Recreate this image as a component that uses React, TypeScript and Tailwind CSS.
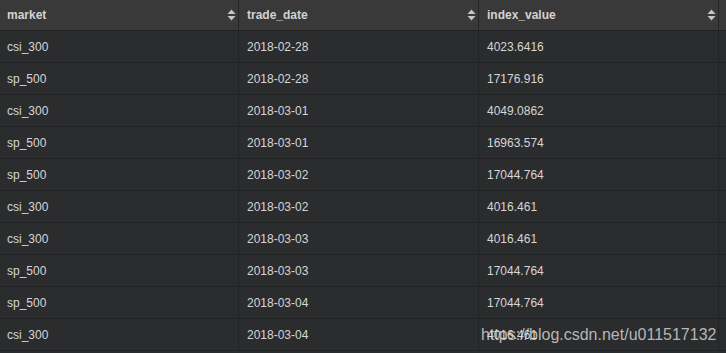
import React from 'react'

const rows = [
  ['csi_300', '2018-02-28', '4023.6416'],
  ['sp_500', '2018-02-28', '17176.916'],
  ['csi_300', '2018-03-01', '4049.0862'],
  ['sp_500', '2018-03-01', '16963.574'],
  ['sp_500', '2018-03-02', '17044.764'],
  ['csi_300', '2018-03-02', '4016.461'],
  ['csi_300', '2018-03-03', '4016.461'],
  ['sp_500', '2018-03-03', '17044.764'],
  ['sp_500', '2018-03-04', '17044.764'],
  ['csi_300', '2018-03-04', '4016.461'],
]

const columns = ['market', 'trade_date', 'index_value']
const widths = ['w-[239px] pl-[7px]', 'w-[240px] pl-[8px]', 'w-[240px] pl-[8px]']

function SortIcon() {
  return (
    <svg width="9" height="12" viewBox="0 0 9 12" className="shrink-0">
      <path d="M4.5 0.5 L8.5 5 L0.5 5 Z" fill="#c4c4c4" />
      <path d="M4.5 11.5 L8.5 7 L0.5 7 Z" fill="#c4c4c4" />
    </svg>
  )
}

export default function App() {
  return (
    <div
      className="relative w-[726px] h-[353px] overflow-hidden bg-[#2a2b2d] text-[12px]"
      style={{ fontFamily: '"Liberation Sans", Arial, sans-serif' }}
    >
      {/* header */}
      <div className="flex h-[31px] bg-[#393939] border-b border-[#232323]">
        {columns.map((c, i) => (
          <div
            key={c}
            className={`flex items-center justify-between pr-[2px] border-r border-[#262626] ${widths[i]}`}
          >
            <span className="font-bold text-[#d2d2d2]">{c}</span>
            <SortIcon />
          </div>
        ))}
      </div>

      {/* body */}
      {rows.map((r, ri) => (
        <div key={ri} className="flex h-[32px] bg-[#2b2c2e] border-b border-[#212224]">
          {r.map((v, ci) => (
            <div
              key={ci}
              className={`flex items-center text-[#d6d6d6] border-r border-[#212224] ${widths[ci]}`}
            >
              {v}
            </div>
          ))}
        </div>
      ))}

      {/* watermark */}
      <div className="absolute left-[481px] top-[323px] text-[16px] text-[#dcdcdc]/80 pointer-events-none">
        https://blog.csdn.net/u011517132
      </div>
    </div>
  )
}
